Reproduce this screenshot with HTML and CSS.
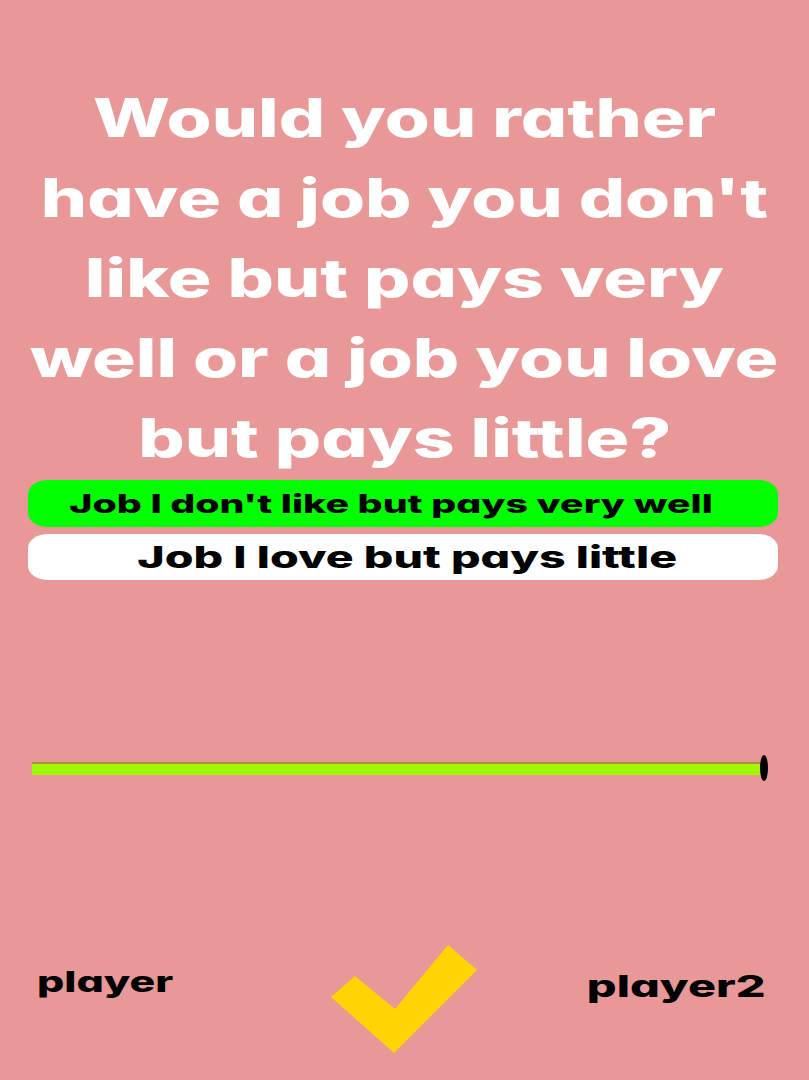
FILE: index.html
```html
<!DOCTYPE html>
<html lang="en">
<head>
<meta charset="utf-8">
<title>Would you rather</title>
<link rel="stylesheet" href="styles.css">
</head>
<body>
<main class="screen">
  <h1 class="question">
    <span class="q-line">Would you rather</span>
    <span class="q-line">have a job you don't</span>
    <span class="q-line">like but pays very</span>
    <span class="q-line">well or a job you love</span>
    <span class="q-line">but pays little?</span>
  </h1>
  <div class="options">
    <div class="option option-selected"><span class="option-text">Job I don't like but pays very well</span></div>
    <div class="option option-plain"><span class="option-text">Job I love but pays little</span></div>
  </div>
  <div class="slider">
    <div class="slider-bar"></div>
    <div class="slider-thumb"></div>
  </div>
  <footer class="footer">
    <span class="player player-left">player</span>
    <svg class="check" viewBox="329 945 146 108" width="146" height="108" aria-hidden="true">
      <polygon points="329,997 353,976 393,1009 446,945 475,970 392,1053" fill="#FFD400"/>
    </svg>
    <span class="player player-right">player2</span>
  </footer>
</main>
</body>
</html>
```

FILE: styles.css
```css
html, body {
  margin: 0;
  padding: 0;
}
body {
  background: #E99898;
  font-family: Inter, "Noto Sans", "DejaVu Sans", sans-serif;
  font-feature-settings: "cv11" 1;
  width: 809px;
  height: 1080px;
  overflow: hidden;
}
.screen {
  display: flex;
  flex-direction: column;
}
.question {
  margin: 0;
  padding: 78px 0 0;
  color: #ffffff;
  font-size: 53px;
  font-weight: 800;
  line-height: 80px;
  text-align: center;
  display: flex;
  flex-direction: column;
  align-items: center;
}
.q-line {
  display: block;
  white-space: nowrap;
  transform: scaleX(1.375);
}
.options {
  display: flex;
  flex-direction: column;
  gap: 7px;
  margin: 2px 31px 0 28px;
}
.option {
  height: 46px;
  display: flex;
  align-items: center;
  justify-content: center;
  border-radius: 20px / 14px;
  color: #000000;
  font-weight: 800;
}
.option-text {
  display: block;
  white-space: nowrap;
}
.option-selected {
  height: 47px;
  background: #00FF00;
  font-size: 26px;
  padding-right: 24px;
}
.option-selected .option-text {
  transform: scaleX(1.51);
}
.option-plain {
  background: #ffffff;
  font-size: 30px;
  padding-left: 8px;
}
.option-plain .option-text {
  transform: scaleX(1.55);
}
.slider {
  position: relative;
  margin: 175px 41px 0 32px;
  height: 26px;
}
.slider-bar {
  margin-top: 7px;
  margin-right: 6px;
  height: 11px;
  background: #A3F800;
  border-top: 2px solid #A88F3C;
}
.slider-thumb {
  position: absolute;
  right: 0;
  top: 0;
  width: 8px;
  height: 26px;
  border-radius: 50%;
  background: #000000;
}
.footer {
  margin-top: 164px;
  display: grid;
  grid-template-columns: 1fr auto 1fr;
  padding: 0 43px 0 37px;
}
.player {
  color: #000000;
  font-weight: 800;
  line-height: 40px;
  white-space: nowrap;
}
.player-left {
  justify-self: start;
  font-size: 28px;
  margin-top: 17px;
  transform: scaleX(1.53);
  transform-origin: left center;
}
.player-right {
  justify-self: end;
  font-size: 30px;
  margin-top: 21px;
  transform: scaleX(1.56);
  transform-origin: right center;
}
.check {
  display: block;
  margin: 0 -12px 0 -8px;
}
```
